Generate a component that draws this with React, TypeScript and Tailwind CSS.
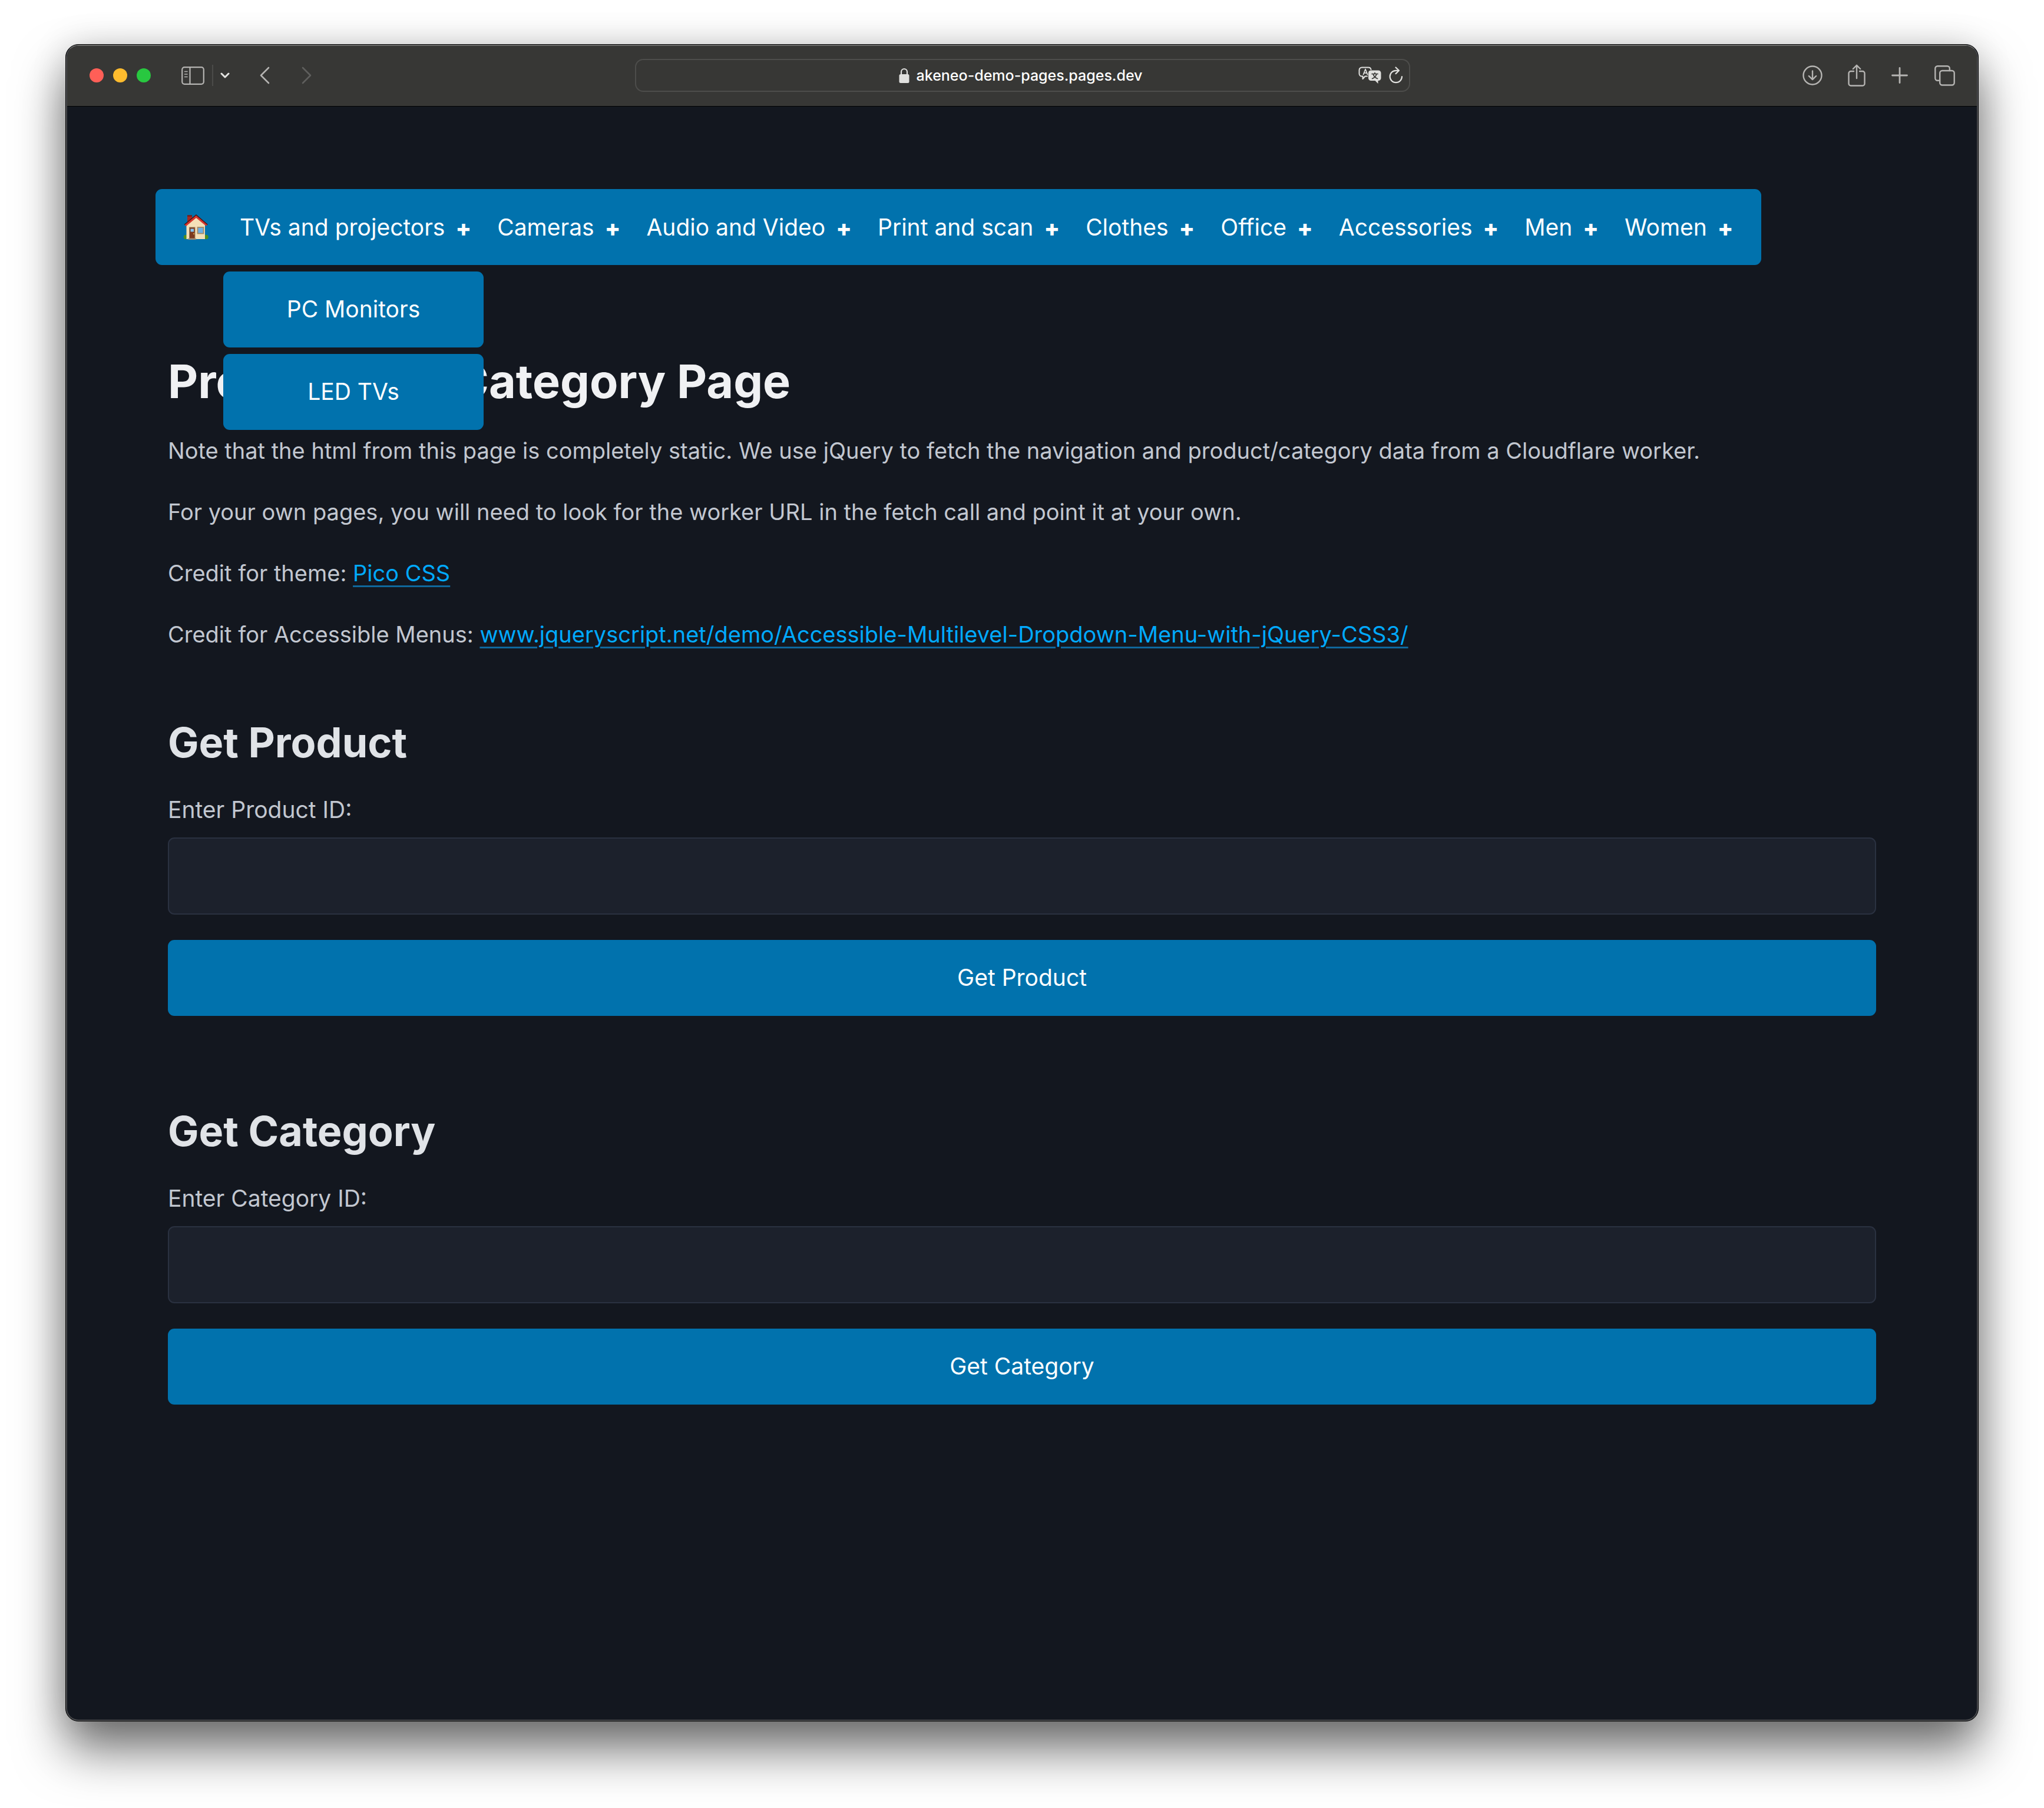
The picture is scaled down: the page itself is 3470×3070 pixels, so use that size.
import React from "react";

const navItems = ["TVs and projectors", "Cameras", "Audio and Video", "Print and scan", "Clothes", "Office", "Accessories", "Men", "Women"];
const subItems = ["PC Monitors", "LED TVs"];

const stroke = { fill: "none", stroke: "currentColor", strokeLinecap: "round", strokeLinejoin: "round" } as const;

function House() {
  return (
    <svg viewBox="0 0 44 44" className="size-[44px]" aria-hidden="true">
      <circle cx="4.5" cy="38.5" r="3.8" fill="#4f8f1f" />
      <circle cx="39" cy="38.5" r="3.8" fill="#4f8f1f" />
      <path d="M7 1.500h8v9l-8 7z" fill="#a52a22" />
      <path d="M7 1.500h8v2H7z" fill="#6f1a16" />
      <path d="M5.500 17 22 3.500 37 17v25H5.500z" fill="#f5e0b8" />
      <path d="M2 17.500 22 1l19.500 16.500-3 2L22 6 5 20z" fill="#d5352e" />
      <path d="M2 17.500 22 1l19.500 16.500" fill="none" stroke="#4a1512" strokeWidth="1.400" />
      <rect x="10.500" y="22" width="9.500" height="19" fill="#7c3a1f" stroke="#a08560" strokeWidth="1" />
      <rect x="12.500" y="24.500" width="5.500" height="5" fill="#86c5f2" />
      <circle cx="18" cy="33" r="1" fill="#f0c050" />
      <rect x="24.500" y="22" width="10" height="10.500" fill="#6fb0e4" stroke="#a58a66" strokeWidth="1.800" />
      <path d="M8 41h14v2H8z" fill="#9b8a78" />
    </svg>
  );
}

function Toolbar() {
  return (
    <header className="flex h-[103px] items-center justify-between border-b border-black bg-[#373735] pb-0.5 pl-[38px] pr-[37px] text-[#b5b4b2]">
      <div className="flex flex-1 items-center">
        <div className="flex gap-4">
          <span className="size-6 rounded-full bg-[#ff5f57]" />
          <span className="size-6 rounded-full bg-[#febc2e]" />
          <span className="size-6 rounded-full bg-[#28c840]" />
        </div>
        <button type="button" aria-label="Sidebar" className="ml-[52px]">
          <svg viewBox="0 0 39 31" className="h-[31px] w-[39px]" {...stroke} strokeWidth="2.2">
            <rect x="1.2" y="1.2" width="36.6" height="28.6" rx="4" />
            <path d="M14.5 1.5v28" />
            <path d="M5.500 8.500h4.500M5.500 13h4.500M5.500 17.500h4.500" strokeWidth="1.6" />
          </svg>
        </button>
        <span className="ml-[13px] h-9 w-0.5 bg-[#4b4b49]" />
        <button type="button" aria-label="Tab groups" className="ml-3 text-[#e4e4e2]">
          <svg viewBox="0 0 16 10" className="h-[10px] w-4" {...stroke} strokeWidth="3">
            <path d="m2 2 6 6 6-6" />
          </svg>
        </button>
        <button type="button" aria-label="Back" className="ml-[50px]">
          <svg viewBox="0 0 18 30" className="h-[30px] w-[18px]" {...stroke} strokeWidth="2.600">
            <path d="M16 2 3 15l13 13" />
          </svg>
        </button>
        <button type="button" aria-label="Forward" className="ml-[54px] text-[#5f5f5d]">
          <svg viewBox="0 0 18 30" className="h-[30px] w-[18px]" {...stroke} strokeWidth="2.600">
            <path d="m2 2 13 13L2 28" />
          </svg>
        </button>
      </div>

      <div className="flex h-14 w-full max-w-[1316px] items-center rounded-[14px] border-2 border-[#4d4d4b] pl-20 pr-2.5 text-[#e0e0de]">
        <div className="flex flex-1 items-center justify-center gap-3">
          <svg viewBox="0 0 18 26" className="h-[26px] w-[18px]" aria-hidden="true">
            <path d="M4 12V7a5 5 0 0 1 10 0v5" fill="none" stroke="currentColor" strokeWidth="2.200" />
            <rect x="0.500" y="11" width="17" height="15" rx="2.500" fill="currentColor" />
          </svg>
          <span className="text-[25px] font-medium leading-8 text-white">akeneo-demo-pages.pages.dev</span>
        </div>
        <div className="flex items-center gap-3">
          <button type="button" aria-label="Translate">
            <svg viewBox="0 0 40 30" className="h-[30px] w-10" {...stroke} strokeWidth="2">
              <path d="M15 16.500H11.500L7.500 21v-4.500H6A4.500 4.500 0 0 1 1.500 12V6A4.500 4.500 0 0 1 6 1.500h11A4.500 4.500 0 0 1 21.500 5" />
              <path d="M8.500 13.500 12 4.500l3.500 9M9.800 10.800h4.400" strokeWidth="1.800" />
              <path d="M21 6.500h13a4.500 4.500 0 0 1 4.500 4.500v8.500A4.500 4.500 0 0 1 34 24h-.5v5L28.500 24H21.500a4.500 4.500 0 0 1-4.500-4.500V11a4.500 4.500 0 0 1 4-4.500z" fill="currentColor" stroke="none" />
              <path d="M23 12.500h10M28 10.500v2M31 12.500c-1 3.500-3.500 6.500-7.500 8M25 12.500c1 3.500 3.500 6.500 7.500 8" stroke="#373735" strokeWidth="1.700" />
            </svg>
          </button>
          <button type="button" aria-label="Reload">
            <svg viewBox="0 0 24 30" className="h-[30px] w-6" {...stroke} strokeWidth="2.200">
              <path d="M22 17a10.200 10.200 0 1 1-10.200-10.200H16" />
              <path d="m11.500 1.500 5.500 5.300-5.500 5.300" />
            </svg>
          </button>
        </div>
      </div>

      <div className="flex flex-1 items-center justify-end">
        <button type="button" aria-label="Downloads">
          <svg viewBox="0 0 34 34" className="size-[34px]" {...stroke} strokeWidth="2.400">
            <circle cx="17" cy="17" r="15.500" />
            <path d="M17 9.500v14.500M10.800 18l6.200 6.200 6.200-6.200" />
          </svg>
        </button>
        <button type="button" aria-label="Share" className="ml-[43px]">
          <svg viewBox="0 0 30 38" className="h-[38px] w-[30px]" {...stroke} strokeWidth="2.400">
            <path d="M10 12H5a3.500 3.500 0 0 0-3.500 3.500V33A3.500 3.500 0 0 0 5 36.500h20a3.500 3.500 0 0 0 3.500-3.500V15.500A3.500 3.500 0 0 0 25 12h-5" />
            <path d="M15 24V2M8.800 8 15 1.800 21.200 8" />
          </svg>
        </button>
        <button type="button" aria-label="New tab" className="ml-[44px]">
          <svg viewBox="0 0 28 28" className="size-[28px]" {...stroke} strokeWidth="2.800">
            <path d="M14 1.500v25M1.500 14h25" />
          </svg>
        </button>
        <button type="button" aria-label="Tabs" className="ml-[45px]">
          <svg viewBox="0 0 35 35" className="size-[35px]" {...stroke} strokeWidth="2.400">
            <rect x="9.200" y="9" width="24.500" height="24.500" rx="4" />
            <path d="M9 25.800H5.300a4 4 0 0 1-4-4V5.300a4 4 0 0 1 4-4h16.500a4 4 0 0 1 4 4V9" />
          </svg>
        </button>
      </div>
    </header>
  );
}

function LookupForm({ kind }: { kind: string }) {
  const id = kind.toLowerCase() + "-id";
  return (
    <form className="flex flex-col" onSubmit={(e) => e.preventDefault()}>
      <h2 className="text-[70px] font-bold leading-[84px] text-[#e0e3e7]">Get {kind}</h2>
      <label htmlFor={id} className="mt-[41px] leading-[62px]">Enter {kind} ID:</label>
      <input id={id} type="text" className="mt-4 h-[131px] w-full rounded-[11px] border-2 border-[#2a3140] bg-[#1c212c] px-10 outline-none" />
      <button type="submit" className="mt-[43px] h-[129px] w-full rounded-[11px] bg-[#0172ad] text-white">Get {kind}</button>
    </form>
  );
}

export default function App() {
  return (
    <div className="flex min-h-screen flex-col bg-white px-[111px] pb-[147px] pt-[75px] font-['Inter',sans-serif]">
      <div className="flex flex-1 flex-col overflow-hidden rounded-[22px] border border-black bg-[#13171f] shadow-[0_48px_84px_rgba(0,0,0,0.56),0_0_60px_rgba(0,0,0,0.14)]">
        <div className="flex flex-1 flex-col overflow-hidden rounded-[21px] border-2 border-[#4a4b4e] border-t-[#6b6b69]">
          <Toolbar />
          <main className="mx-auto w-full max-w-[2900px] pb-24 pt-[140px] text-[39px] text-[#c2c7d0]">
            <nav className="-ml-[21px] flex h-[129px] w-fit items-center rounded-[11px] bg-[#0172ad] px-[47px] text-white">
              <a href="#home" aria-label="Home"><House /></a>
              <ul className="ml-[52px] flex items-center gap-11">
                {navItems.map((item, i) => (
                  <li key={item} className="relative">
                    <a href="#category" className="flex items-center gap-[18px] whitespace-nowrap leading-[62px]">
                      {item}
                      <span className="pt-0.5 font-extrabold">+</span>
                    </a>
                    {i === 0 && (
                      <ul className="absolute -left-7 top-[107px] z-10 flex w-[442px] flex-col gap-[11px]">
                        {subItems.map((sub) => (
                          <li key={sub}>
                            <a href="#category" className="flex h-[129px] items-center justify-center rounded-[11px] bg-[#0172ad]">{sub}</a>
                          </li>
                        ))}
                      </ul>
                    )}
                  </li>
                ))}
              </ul>
            </nav>
            <h1 className="mt-[147px] text-[79px] font-bold leading-[100px] text-[#f0f1f3]">Product and Category Page</h1>
            <div className="mt-[37px] flex flex-col gap-[42px] text-[38px] leading-[62px]">
              <p>Note that the html from this page is completely static. We use jQuery to fetch the navigation and product/category data from a Cloudflare worker.</p>
              <p>For your own pages, you will need to look for the worker URL in the fetch call and point it at your own.</p>
              <p>Credit for theme: <a href="https://picocss.com" className="text-[#01aaff] underline decoration-[#0f679c] decoration-[3px] underline-offset-[7px]">Pico CSS</a></p>
              <p>Credit for Accessible Menus: <a href="https://www.jqueryscript.net/demo/Accessible-Multilevel-Dropdown-Menu-with-jQuery-CSS3/" className="text-[#01aaff] underline decoration-[#0f679c] decoration-[3px] underline-offset-[7px]">www.jqueryscript.net/demo/Accessible-Multilevel-Dropdown-Menu-with-jQuery-CSS3/</a></p>
            </div>
            <div className="mt-[111px] flex flex-col gap-[154px]">
              <LookupForm kind="Product" />
              <LookupForm kind="Category" />
            </div>
          </main>
        </div>
      </div>
    </div>
  );
}
